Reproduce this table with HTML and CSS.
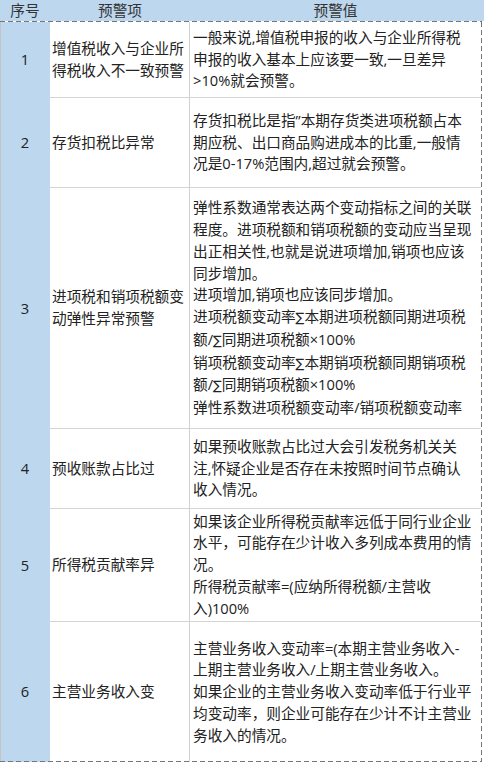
FILE: index.html
```html
<!DOCTYPE html>
<html lang="zh-CN">
<head>
<meta charset="utf-8">
<title>预警</title>
<link rel="stylesheet" href="styles.css">
</head>
<body>
<div class="sheet">
  <div class="head">
    <div class="hcell">序号</div>
    <div class="hcell">预警项</div>
    <div class="hcell">预警值</div>
  </div>
  <div class="dash-h"></div>
  <div class="body">
    <div class="row r1">
      <div class="c no">1</div>
      <div class="c item"><div class="t">增值税收入与企业所<br>得税收入不一致预警</div></div>
      <div class="c val"><div class="t">一般来说,增值税申报的收入与企业所得税<br>申报的收入基本上应该要一致,一旦差异<br>&gt;10%就会预警。</div></div>
    </div>
    <div class="row r2">
      <div class="c no">2</div>
      <div class="c item"><div class="t">存货扣税比异常</div></div>
      <div class="c val"><div class="t">存货扣税比是指”本期存货类进项税额占本<br>期应税、出口商品购进成本的比重,一般情<br>况是0-17%范围内,超过就会预警。</div></div>
    </div>
    <div class="row r3">
      <div class="c no">3</div>
      <div class="c item"><div class="t">进项税和销项税额变<br>动弹性异常预警</div></div>
      <div class="c val"><div class="t">弹性系数通常表达两个变动指标之间的关联<br>程度。进项税额和销项税额的变动应当呈现<br>出正相关性,也就是说进项增加,销项也应该<br>同步增加。<br>进项增加,销项也应该同步增加。<br>进项税额变动率<span class="sym">∑</span>本期进项税额同期进项税<br>额/<span class="sym">∑</span>同期进项税额×100%<br>销项税额变动率<span class="sym">∑</span>本期销项税额同期销项税<br>额/<span class="sym">∑</span>同期销项税额×100%<br>弹性系数进项税额变动率/销项税额变动率</div></div>
    </div>
    <div class="row r4">
      <div class="c no">4</div>
      <div class="c item"><div class="t">预收账款占比过</div></div>
      <div class="c val"><div class="t">如果预收账款占比过大会引发税务机关关<br>注,怀疑企业是否存在未按照时间节点确认<br>收入情况。</div></div>
    </div>
    <div class="row r5">
      <div class="c no">5</div>
      <div class="c item"><div class="t">所得税贡献率异</div></div>
      <div class="c val"><div class="t">如果该企业所得税贡献率远低于同行业企业<br>水平，可能存在少计收入多列成本费用的情<br>况。<br>所得税贡献率=(应纳所得税额/主营收<br>入)100%</div></div>
    </div>
    <div class="row r6 last">
      <div class="c no">6</div>
      <div class="c item"><div class="t">主营业务收入变</div></div>
      <div class="c val"><div class="t">主营业务收入变动率=(本期主营业务收入-<br>上期主营业务收入/上期主营业务收入。<br>如果企业的主营业务收入变动率低于行业平<br>均变动率，则企业可能存在少计不计主营业<br>务收入的情况。</div></div>
    </div>
  </div>
</div>
</body>
</html>
```
FILE: styles.css
```css
* { box-sizing: border-box; }
html, body { margin: 0; padding: 0; background: #ffffff; }
body {
  width: 484px;
  font-family: "Open Sans", "Noto Sans CJK SC", "DejaVu Sans", sans-serif;
  font-size: 14.67px;
  color: #222222;
}
.sym { font-family: "DejaVu Sans", sans-serif; font-size: 13px; }
.sheet { width: 484px; }
.head {
  display: grid;
  grid-template-columns: 50px 140px 294px;
  height: 21px;
  background: #bdd7ee;
}
.hcell {
  display: flex;
  align-items: center;
  justify-content: center;
  line-height: 21px;
  color: #333333;
}
.hcell:last-child { padding-right: 3px; }
.dash-h {
  width: 482px;
  height: 1px;
  background: repeating-linear-gradient(90deg, #757575 0 5px, transparent 5px 8px);
}
.body {
  width: 482px;
  padding-right: 1px;
  background:
    repeating-linear-gradient(180deg, #757575 0 5px, transparent 5px 8px) right top / 1px 100% no-repeat;
}
.row {
  display: grid;
  grid-template-columns: 50px 140px 291px;
}
.r1 { height: 76px; }
.r2 { height: 90px; }
.r3 { height: 241px; }
.r4 { height: 80px; }
.r5 { height: 113px; }
.r6 { height: 139px; }
.c {
  display: flex;
  align-items: center;
  line-height: 21.75px;
  white-space: nowrap;
}
.no {
  justify-content: center;
  background: #bdd7ee;
  border-left: 1px solid #c4c4c4;
  padding-right: 1px;
}
.item {
  padding-left: 2px;
  border-right: 1px solid #d0d0d0;
  border-bottom: 1px solid #d4d4d4;
}
.val {
  padding-left: 3px;
  border-bottom: 1px solid #d4d4d4;
}
.last .item, .last .val { border-bottom: none; }
.last { height: 140px; position: relative; }
.last::after {
  content: "";
  position: absolute;
  left: 0;
  bottom: 0;
  width: 482px;
  height: 1px;
  background: repeating-linear-gradient(90deg, #757575 0 5px, transparent 5px 8px);
}
```
